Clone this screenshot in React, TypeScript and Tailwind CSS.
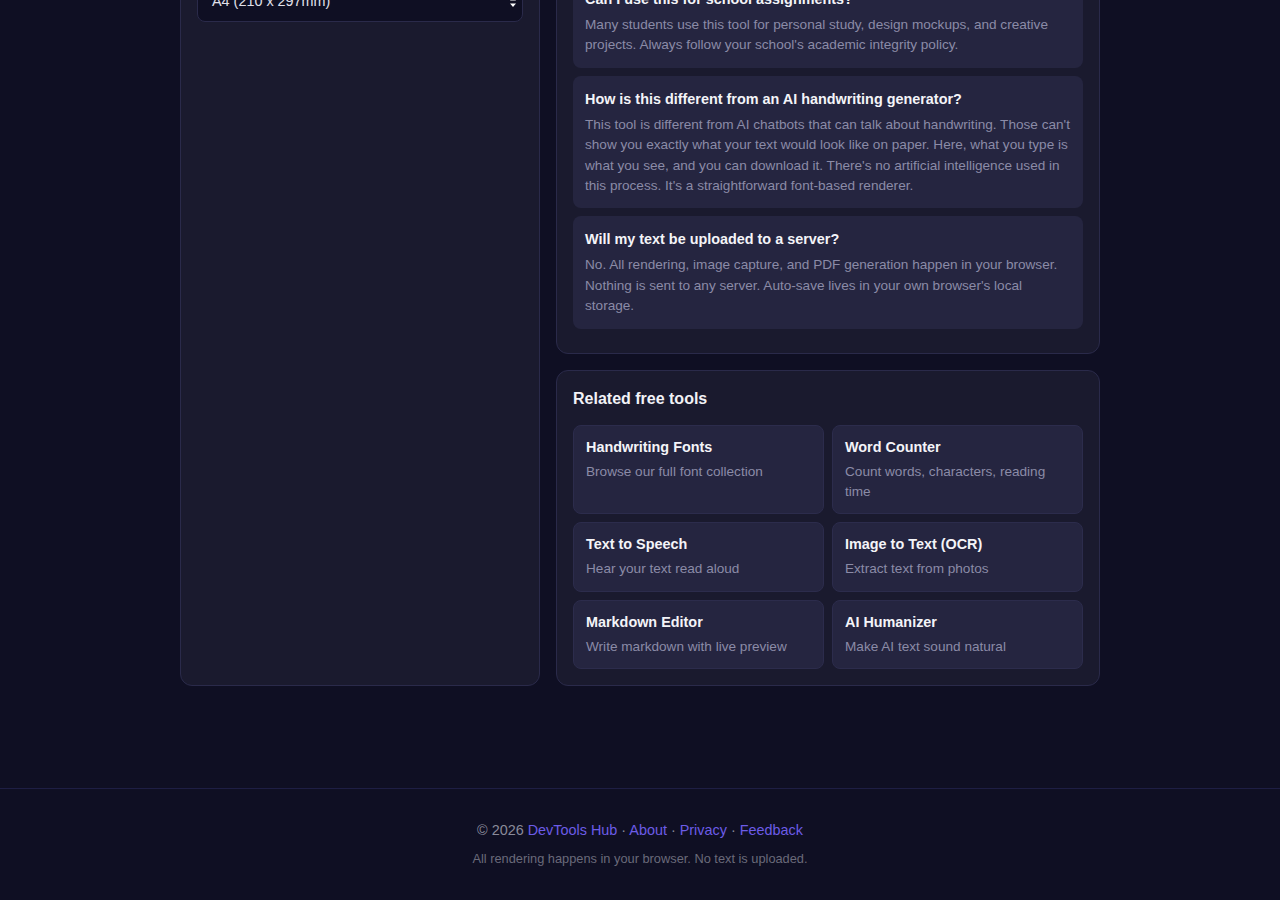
import React from "react";

const faqs = [
  {
    q: "Can I use this for school assignments?",
    a: "Many students use this tool for personal study, design mockups, and creative projects. Always follow your school's academic integrity policy.",
  },
  {
    q: "How is this different from an AI handwriting generator?",
    a: "This tool is different from AI chatbots that can talk about handwriting. Those can't show you exactly what your text would look like on paper. Here, what you type is what you see, and you can download it. There's no artificial intelligence used in this process. It's a straightforward font-based renderer.",
  },
  {
    q: "Will my text be uploaded to a server?",
    a: "No. All rendering, image capture, and PDF generation happen in your browser. Nothing is sent to any server. Auto-save lives in your own browser's local storage.",
  },
];

const tools = [
  { name: "Handwriting Fonts", desc: "Browse our full font collection" },
  { name: "Word Counter", desc: "Count words, characters, reading time" },
  { name: "Text to Speech", desc: "Hear your text read aloud" },
  { name: "Image to Text (OCR)", desc: "Extract text from photos" },
  { name: "Markdown Editor", desc: "Write markdown with live preview" },
  { name: "AI Humanizer", desc: "Make AI text sound natural" },
];

export default function App() {
  return (
    <div
      className="flex min-h-screen flex-col bg-[#0f0f23] text-[#e8e8f0]"
      style={{ fontFamily: '"Liberation Sans", Arial, sans-serif' }}
    >
      <main className="mx-auto -mt-[79px] grid w-[920px] grid-cols-[360px_544px] gap-4">
        {/* Settings panel */}
        <section className="rounded-xl border border-[#2a2a4a] bg-[#1a1a2e] p-4">
          <label className="mt-4 mb-2 block text-[13px] leading-5 text-[#9a9ab8]">
            Paper size
          </label>
          <div className="relative">
            <div className="flex h-10 items-center rounded-lg border border-[#2a2a4a] bg-[#0f0f23] px-[14px] text-[14.4px] text-[#e0e0ea]">
              A4 (210 x 297mm)
            </div>
            <svg
              className="absolute top-1/2 right-[4px] h-3 w-3 -translate-y-1/2 text-white"
              viewBox="0 0 12 12"
              fill="currentColor"
            >
              <path d="M6 1 9 4.5H3zM6 11 3 7.5h6z" />
            </svg>
          </div>
        </section>

        <div className="flex flex-col gap-4">
          {/* FAQ */}
          <section className="rounded-xl border border-[#2a2a4a] bg-[#1a1a2e] px-4 pt-4 pb-6">
            <h2 className="mb-[14px] text-[16px] leading-6 font-bold text-[#f2f2f7]">
              Frequently asked questions
            </h2>
            <div className="flex flex-col gap-2">
              {faqs.map((f) => (
                <div key={f.q} className="rounded-lg bg-[#252540] px-3 pt-[13px] pb-3">
                  <h3 className="mb-[6px] text-[14.4px] leading-5 font-bold text-[#f4f4f8]">
                    {f.q}
                  </h3>
                  <p className="text-[13.6px] leading-[20.4px] text-[#8b8ba7]">{f.a}</p>
                </div>
              ))}
            </div>
          </section>

          {/* Related tools */}
          <section className="rounded-xl border border-[#2a2a4a] bg-[#1a1a2e] p-4">
            <h2 className="mb-[14px] text-[16px] leading-6 font-bold text-[#f2f2f7]">
              Related free tools
            </h2>
            <div className="grid grid-cols-2 gap-2">
              {tools.map((t) => (
                <a
                  key={t.name}
                  href="#"
                  className="block rounded-lg border border-[#2c2c4c] bg-[#252540] px-3 py-[11px]"
                >
                  <div className="mb-[5px] text-[14.4px] leading-5 font-bold text-[#f4f4f8]">
                    {t.name}
                  </div>
                  <div className="text-[13.6px] leading-[20.4px] text-[#8b8ba7]">{t.desc}</div>
                </a>
              ))}
            </div>
          </section>
        </div>
      </main>

      <footer className="mt-[102px] border-t border-[#1e1e44] pt-[31px] pb-8 text-center">
        <p className="text-[14.4px] leading-5 text-[#8a8a9a]">
          © 2026 <a href="#" className="text-[#6c5ce7]">DevTools Hub</a> ·{" "}
          <a href="#" className="text-[#6c5ce7]">About</a> ·{" "}
          <a href="#" className="text-[#6c5ce7]">Privacy</a> ·{" "}
          <a href="#" className="text-[#6c5ce7]">Feedback</a>
        </p>
        <p className="mt-[9px] text-[12.8px] leading-5 text-[#6a6a7a]">
          All rendering happens in your browser. No text is uploaded.
        </p>
      </footer>
    </div>
  );
}
